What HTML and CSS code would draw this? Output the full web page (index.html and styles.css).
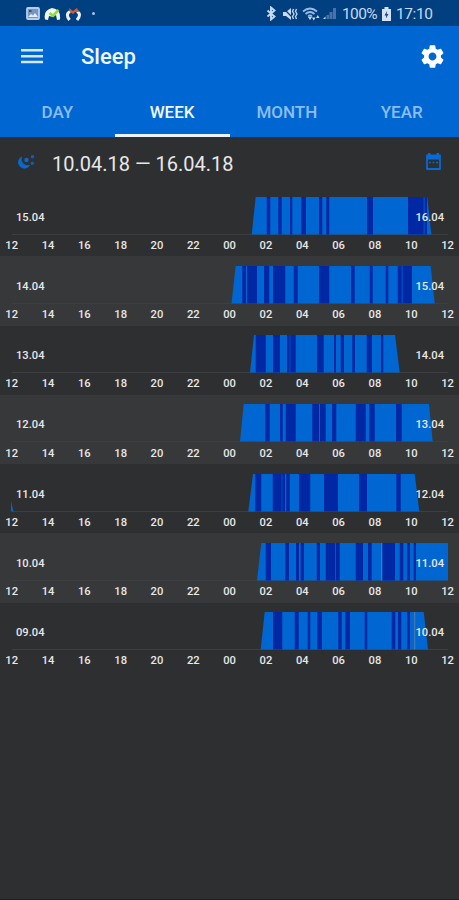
FILE: index.html
```html
<!DOCTYPE html>
<html lang="en">
<head>
    <meta charset="UTF-8">
    <meta name="viewport" content="width=device-width, initial-scale=1.0">
    <title>Sleep</title>
    <link rel="stylesheet" href="styles.css">
</head>
<body>
    <div class="statusbar">
        <div class="status-left">
            <svg width="14" height="13" viewBox="0 0 14 13"><rect x="1" y="1" width="12" height="11" rx="1" fill="#7795c0" stroke="#b9cdea" stroke-width="1.8"/><path d="M2 10l3-3 2 1.500 2-2.500 3 4z" fill="#e3ecfa"/><rect x="3" y="3" width="2.500" height="2" fill="#27558e"/></svg>
            <svg width="17" height="14" viewBox="0 0 17 14"><path d="M1 12.500Q-1 3 8 1q9 1 8 11.500l-3 .5-1-5-3 2-4-1-1 4z" fill="#f2f4fa"/><path d="M5.500 6l3.500 2.800L14.500 3" fill="none" stroke="#8ede3c" stroke-width="2.600"/></svg>
            <svg width="17" height="14" viewBox="0 0 17 14"><path d="M4.500 13Q0 7 5 4.500M12 13Q17 7 12 4.500" fill="none" stroke="#eef0fa" stroke-width="3"/><path d="M4 1l4 3 4-3 2 4-4 0-2 2-3-2z" fill="#e0572f"/></svg>
            <span class="dot"></span>
        </div>
        <div class="status-right">
            <svg class="bt" width="11" height="15" viewBox="0 0 11 15"><path d="M1.500 4.500l7 6-3.500 3V1.500l3.500 3-7 6" fill="none" stroke="#c9d9f2" stroke-width="1.900"/></svg>
            <svg class="mute" width="16" height="14" viewBox="0 0 16 14"><path d="M1 5h3l5-4v12l-5-4H1z" fill="#c9d9f2"/><path d="M1 1l12 12" stroke="#004080" stroke-width="1.200"/><path d="M11.500 2l-1 2.500 1.500 2.500-1.500 2.500 1 2.500M14.500 2l-1 2.500 1.500 2.500-1.500 2.500 1 2.500" fill="none" stroke="#c9d9f2" stroke-width="1.300"/></svg>
            <svg class="wifi" width="18" height="14" viewBox="0 0 18 14"><path d="M1 4.500q7-6 14 0M3.500 7q4.500-4 9 0M6 9.500q2-2 4 0" fill="none" stroke="#9fb9df" stroke-width="1.700"/><path d="M8 13l-2-3h4z" fill="#c9d9f2"/><path d="M10 10.500h3.500l-1.700 3zM14 11h3.500l-1.700-3z" fill="#c9d9f2"/></svg>
            <svg class="signal" width="14" height="13" viewBox="0 0 14 13"><path d="M0 12h2.500v-2.500z" fill="#c9d9f2"/><path d="M3.500 12V8h2.500v4zM6.500 12V5h3v7zM10 12V1h3v11z" fill="#4873a8"/></svg>
            <span class="percent">100%</span>
            <svg class="battery" width="9" height="14" viewBox="0 0 9 14"><path d="M2.500 0h4v2H9v12H0V2h2.500z" fill="#d5e2f5"/><path d="M5 4L2.500 8.500h1.700L4 11.500l2.500-4.500H4.800z" fill="#1b4779"/></svg>
            <span class="clock">17:10</span>
        </div>
    </div>

    <header class="toolbar">
        <svg class="menu" width="22" height="16" viewBox="0 0 22 16"><path d="M0 2.200h22M0 8.200h22M0 14h22" stroke="#d8e8fb" stroke-width="2.400"/></svg>
        <h1>Sleep</h1>
        <svg class="gear" width="27" height="27" viewBox="0 0 24 24"><path fill="#fff" d="M19.430 12.980c.04-.32.070-.64.070-.98s-.03-.66-.07-.98l2.110-1.650c.19-.15.24-.42.120-.64l-2-3.460c-.12-.22-.39-.3-.61-.22l-2.490 1c-.52-.4-1.080-.73-1.690-.98l-.38-2.650C14.460 2.180 14.250 2 14 2h-4c-.25 0-.46.18-.49.42l-.38 2.650c-.61.25-1.170.59-1.690.98l-2.490-1c-.23-.09-.49 0-.61.22l-2 3.460c-.13.22-.07.49.12.64l2.110 1.650c-.04.32-.07.65-.07.98s.03.66.07.98l-2.110 1.650c-.19.15-.24.42-.12.64l2 3.460c.12.22.39.3.61.22l2.490-1c.52.4 1.080.73 1.690.98l.38 2.650c.03.24.24.42.49.42h4c.25 0 .46-.18.49-.42l.38-2.650c.61-.25 1.170-.59 1.690-.98l2.490 1c.23.09.49 0 .61-.22l2-3.460c.12-.22.07-.49-.12-.64l-2.110-1.650zM12 15.500c-1.930 0-3.500-1.570-3.500-3.500s1.570-3.500 3.500-3.500 3.500 1.570 3.500 3.500-1.570 3.500-3.500 3.500z"/></svg>
    </header>

    <nav class="tabs">
        <a class="tab">DAY</a>
        <a class="tab active">WEEK</a>
        <a class="tab">MONTH</a>
        <a class="tab">YEAR</a>
    </nav>

    <div class="period">
        <svg class="moon" width="20" height="17" viewBox="0 0 20 17"><path d="M5.500 3A6 6 0 1 0 13.500 11.500 6.600 6.600 0 0 1 5.500 3z" fill="#0b69cc" stroke="#0b69cc" stroke-width=".8" stroke-linejoin="round"/><circle cx="10.500" cy="6" r="2.200" fill="#0b69cc"/><circle cx="16.500" cy="2.800" r="1.800" fill="#0b5fb6"/><circle cx="16.300" cy="9.300" r="1.700" fill="#0b5fb6"/></svg>
        <span class="range">10.04.18 — 16.04.18</span>
        <svg class="calendar" width="17" height="18" viewBox="0 0 17 18"><path d="M2 2.500h13v13.500H2z" fill="none" stroke="#086bd3" stroke-width="1.800" stroke-linejoin="round"/><path d="M2 2h13v4.500H2zM3 0h2.500v3H3zM11.500 0H14v3h-2.500z" fill="#086bd3"/><path d="M4 9.500h1.800M7.600 9.500h1.800M11.200 9.500H13" stroke="#086bd3" stroke-width="1.600"/></svg>
    </div>

    <main id="days"></main>

    <script src="script.js"></script>
</body>
</html>
```

FILE: styles.css
```css
* {
    box-sizing: border-box;
    margin: 0;
    padding: 0;
}

body {
    width: 459px;
    height: 900px;
    overflow: hidden;
    background: #2e2f31;
    color: #e8e8e8;
    font-family: Roboto, 'Liberation Sans', sans-serif;
    border-bottom: 1px solid #211f22;
}

svg {
    display: block;
    flex: none;
}

.statusbar {
    display: flex;
    justify-content: space-between;
    height: 26px;
    padding: 1px 26px 0;
    background: #004080;
}

.status-left,
.status-right {
    display: flex;
    align-items: center;
}

.status-left {
    gap: 4px;
}

.dot {
    width: 3px;
    height: 3px;
    margin-left: 6px;
    border-radius: 50%;
    background: #a9c2e2;
}

.percent,
.clock {
    color: #c9d9f2;
    font-size: 15.500px;
    line-height: 26px;
}

.mute {
    margin-left: 5px;
}

.wifi {
    margin-left: 4px;
}

.signal {
    margin-left: 3px;
}

.percent {
    margin-left: 5px;
    width: 37px;
    letter-spacing: -0.6px;
}

.battery {
    margin-left: 3px;
}

.clock {
    margin-left: 5px;
    width: 37px;
    letter-spacing: -0.4px;
}

.toolbar {
    display: flex;
    align-items: center;
    height: 60px;
    padding: 0 13px 0 21px;
    background: #0067d2;
}

.toolbar h1 {
    flex: 1;
    margin-left: 38px;
    color: #f1f6fd;
    font-size: 22px;
    font-weight: 500;
}

.tabs {
    display: grid;
    grid-template-columns: repeat(4, 1fr);
    height: 51px;
    background: #0067d2;
}

.tab {
    padding-top: 4px;
    border-bottom: 3px solid transparent;
    color: #8dbdf0;
    font-size: 17px;
    font-weight: 500;
    line-height: 44px;
    text-align: center;
}

.tab.active {
    border-bottom-color: #eaf2fa;
    color: #f1f6fd;
}

.period {
    display: flex;
    align-items: center;
    height: 50px;
    padding: 0 17px 0 16px;
}

.moon {
    margin-top: 1px;
}

.range {
    flex: 1;
    margin: 3px 0 0 16px;
    font-size: 20px;
}

.calendar {
    margin-bottom: 1px;
}

.day {
    height: 69.25px;
    padding-top: 9.700px;
}

.day:nth-child(even) {
    background: #37383a;
}

.plot {
    position: relative;
    height: 38px;
}

.date {
    position: absolute;
    top: 14px;
    font-size: 11.200px;
    font-weight: 500;
    line-height: 14px;
}

.from {
    left: 16px;
}

.to {
    right: 15px;
}

.hours {
    display: grid;
    grid-template-columns: repeat(13, 36.330px);
    margin-left: -6.500px;
    padding-top: 4.300px;
    font-size: 11.200px;
    font-weight: 500;
    line-height: 14px;
    text-align: center;
}

.bar {
    fill: #0067d2;
}

.wake {
    fill: #0028a5;
}

.gap {
    fill: #4578ad;
}

.axis {
    stroke: #3e3f41;
    stroke-width: 1;
}
```

FILE: script.js
```js
// shape: bottom-left, top-left, top-right, bottom-right
// wake: start/end of every dark stripe
const days = [
    {
        from: '15.04', to: '16.04', shape: [251.7, 255.7, 427.3, 431.3],
        wake: [[266.7, 270.3], [278.3, 281.7], [290, 292.3], [301.3, 306], [319, 322.3], [326.3, 329.3], [367, 373], [408, 423.7], [424.5, 427]]
    },
    {
        from: '14.04', to: '15.04', shape: [231.5, 235.7, 430.7, 434.7],
        wake: [[242.3, 246], [247, 257], [264, 269.3], [273, 285.3], [293.7, 297.7], [319, 329.3], [351, 354.7], [369.7, 372.7], [385.7, 388.3], [397.7, 401.7], [402.5, 412]]
    },
    {
        from: '13.04', to: '14.04', shape: [250, 254, 395, 399.7],
        wake: [[255.7, 265.7], [273, 280], [287, 289.7], [290.3, 295.7], [317, 323.7], [334, 336], [340.7, 344], [352.3, 355], [366.7, 372], [381, 383.3]]
    },
    {
        from: '12.04', to: '13.04', shape: [240, 243.7, 429, 432.7],
        wake: [[265.3, 269.7], [280, 282.7], [285.7, 295.7], [312.3, 319], [320, 325.7], [332, 336.3], [355.7, 365.7], [369.3, 374.7], [396, 401.7]]
    },
    {
        from: '11.04', to: '12.04', shape: [248.3, 253, 414.7, 419.3], early: true,
        wake: [[255.3, 261.3], [272.7, 281.7], [282.3, 285], [286.3, 289.7], [299, 310.3], [324, 338], [359, 367], [396.3, 400.7]]
    },
    {
        from: '10.04', to: '11.04', shape: [257, 261.3, 448, 448], gap: 381,
        wake: [[265.7, 271], [285.3, 289], [296, 299], [300.7, 304], [316.7, 320], [325.7, 335], [335.7, 339.7], [355.7, 363], [368, 371.7], [382.3, 395], [399.7, 403.3], [407.3, 410], [413.7, 416]]
    },
    {
        from: '09.04', to: '10.04', shape: [260.7, 264.7, 423.7, 428], gap: 414,
        wake: [[273, 282.3], [294.7, 298.7], [307.7, 310.3], [317.3, 322], [338.3, 341.7], [345.3, 350], [364.7, 367.3], [391.7, 395.3], [398, 401.3], [407.3, 410]]
    }
];

const hours = ['12', '14', '16', '18', '20', '22', '00', '02', '04', '06', '08', '10', '12'];

document.getElementById('days').innerHTML = days.map(function(day) {
    const s = day.shape;
    let chart = '<path class="axis" d="M12 37.500H448"/>';
    chart += `<path class="bar" d="M${s[0]} 37.500L${s[1]} 0H${s[2]}L${s[3]} 37.500z"/>`;
    day.wake.forEach(function(w) {
        chart += `<rect class="wake" x="${w[0]}" y="0" width="${w[1] - w[0]}" height="37.500"/>`;
    });
    if (day.gap) {
        chart += `<rect class="gap" x="${day.gap}" y="0" width="1.200" height="37.500"/>`;
    }
    if (day.early) {
        chart += '<path class="bar" d="M11 37.500V27L13.500 37.500z"/>';
    }
    return `<section class="day">
        <div class="plot">
            <svg width="459" height="38" viewBox="0 0 459 38">${chart}</svg>
            <span class="date from">${day.from}</span>
            <span class="date to">${day.to}</span>
        </div>
        <div class="hours">${hours.map(h => `<span>${h}</span>`).join('')}</div>
    </section>`;
}).join('');
```
